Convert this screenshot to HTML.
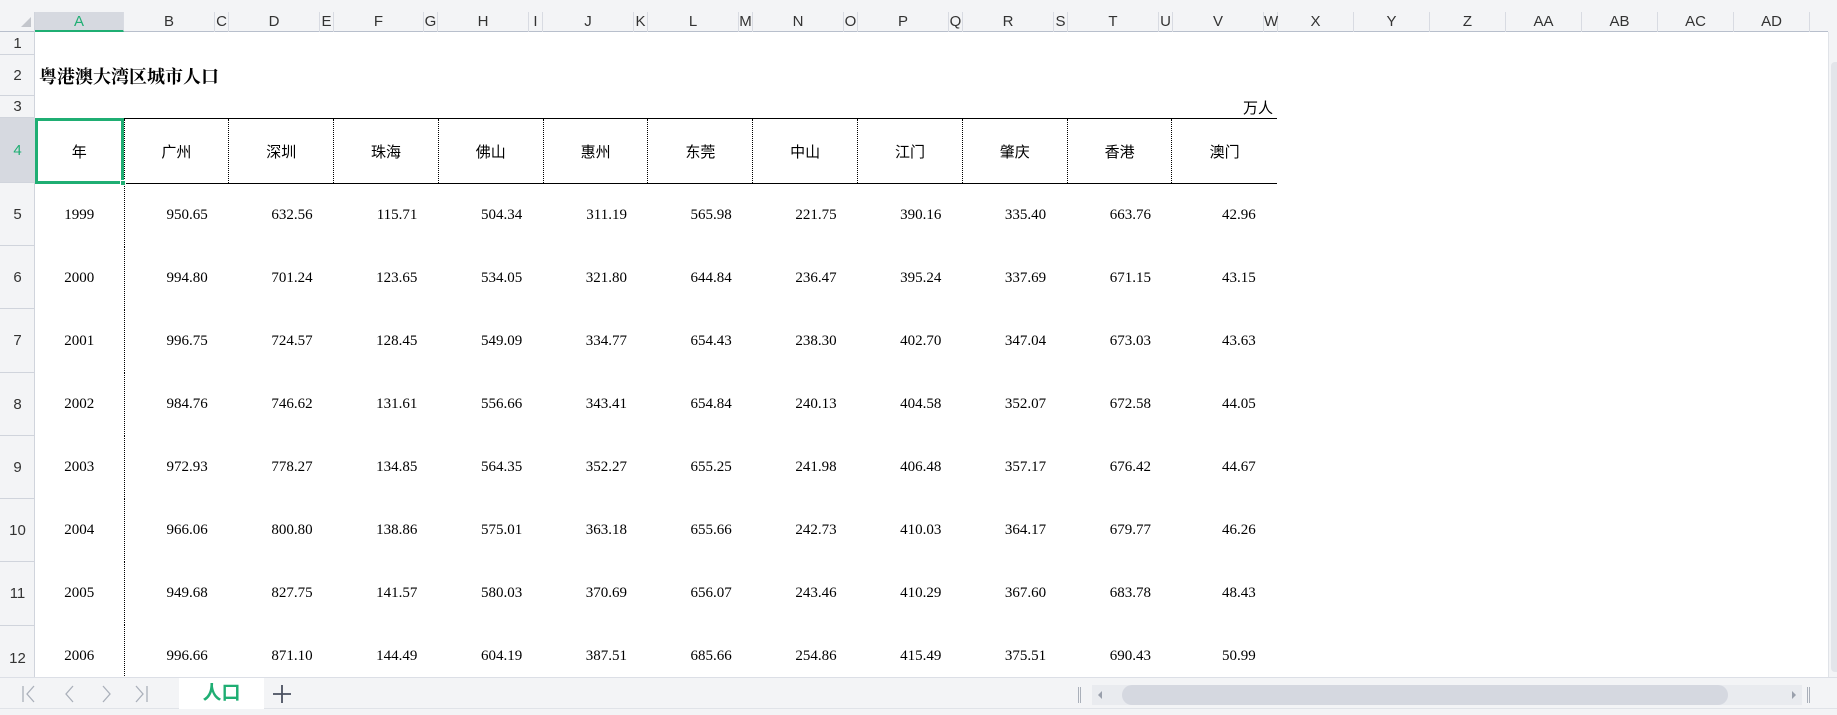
<!DOCTYPE html>
<html><head><meta charset="utf-8">
<style>
*{margin:0;padding:0;box-sizing:border-box}
body{width:1837px;height:715px;overflow:hidden;background:#f3f4f6;position:relative;font-family:"Liberation Serif","Noto Serif CJK SC",serif}
.abs{position:absolute}
#sheet{left:35px;top:32px;width:1793px;height:645px;background:#fff;overflow:hidden}
.ch{position:absolute;top:12px;height:20px;font:15px "Liberation Sans","Noto Sans CJK SC",sans-serif;color:#333;text-align:center;line-height:20px;border-right:1px solid #d8dbe2}
.rh{position:absolute;left:0;width:35px;font:15px "Liberation Sans",sans-serif;color:#333;text-align:center;border-bottom:1px solid #d0d4dc}
table{position:absolute;left:0;top:86px;border-collapse:collapse;table-layout:fixed}
td{font-size:15px;color:#000;text-align:right;padding-right:21px;height:63px;white-space:nowrap}
td:first-child{text-align:center;padding-right:0;border-right:1px dotted #000}
tr.h td{height:65px;text-align:center;padding:0;border-top:1.5px solid #000;border-bottom:1.5px solid #000;border-right:1px dotted #000;font-family:"Liberation Sans","Noto Sans CJK SC",sans-serif}
tr.h td:last-child{border-right:none}
</style></head><body>
<div class="abs" style="left:0;top:12px;width:1828px;height:20px;border-bottom:1px solid #b8bfcc"></div>
<div class="abs" style="left:0;top:12px;width:35px;height:20px;border-right:1px solid #d0d4dc"></div>
<div class="abs" style="left:21px;top:17px;width:0;height:0;border-left:10px solid transparent;border-bottom:10px solid #c3c6cc"></div>
<div class="ch" style="left:35px;width:89px;background:#d6d9e0;color:#1fae73;border-bottom:2px solid #1fae73">A</div>
<div class="ch" style="left:124px;width:91px">B</div><div class="ch" style="left:215px;width:14px">C</div>
<div class="ch" style="left:229px;width:91px">D</div><div class="ch" style="left:320px;width:14px">E</div>
<div class="ch" style="left:334px;width:90px">F</div><div class="ch" style="left:424px;width:14px">G</div>
<div class="ch" style="left:438px;width:91px">H</div><div class="ch" style="left:529px;width:14px">I</div>
<div class="ch" style="left:543px;width:91px">J</div><div class="ch" style="left:634px;width:14px">K</div>
<div class="ch" style="left:648px;width:91px">L</div><div class="ch" style="left:739px;width:14px">M</div>
<div class="ch" style="left:753px;width:91px">N</div><div class="ch" style="left:844px;width:14px">O</div>
<div class="ch" style="left:858px;width:91px">P</div><div class="ch" style="left:949px;width:14px">Q</div>
<div class="ch" style="left:963px;width:91px">R</div><div class="ch" style="left:1054px;width:14px">S</div>
<div class="ch" style="left:1068px;width:91px">T</div><div class="ch" style="left:1159px;width:14px">U</div>
<div class="ch" style="left:1173px;width:91px">V</div><div class="ch" style="left:1264px;width:14px">W</div>
<div class="ch" style="left:1278px;width:76px">X</div>
<div class="ch" style="left:1354px;width:76px">Y</div>
<div class="ch" style="left:1430px;width:76px">Z</div>
<div class="ch" style="left:1506px;width:76px">AA</div>
<div class="ch" style="left:1582px;width:76px">AB</div>
<div class="ch" style="left:1658px;width:76px">AC</div>
<div class="ch" style="left:1734px;width:76px">AD</div>
<div class="abs" style="left:0;top:32px;width:35px;height:645px;border-right:1px solid #d0d4dc"></div>
<div class="rh" style="top:32px;height:23px;line-height:23px">1</div>
<div class="rh" style="top:55px;height:41px;line-height:41px">2</div>
<div class="rh" style="top:96px;height:22px;line-height:22px">3</div>
<div class="rh" style="top:118px;height:65px;line-height:65px;background:#d6d9e0;color:#1fae73">4</div>
<div class="rh" style="top:183px;height:63px;line-height:63px">5</div>
<div class="rh" style="top:246px;height:63px;line-height:63px">6</div>
<div class="rh" style="top:309px;height:64px;line-height:64px">7</div>
<div class="rh" style="top:373px;height:63px;line-height:63px">8</div>
<div class="rh" style="top:436px;height:63px;line-height:63px">9</div>
<div class="rh" style="top:499px;height:63px;line-height:63px">10</div>
<div class="rh" style="top:562px;height:64px;line-height:64px">11</div>
<div class="rh" style="top:626px;height:51px;line-height:66px;border-bottom:none">12</div>
<div id="sheet" class="abs">
<div class="abs" style="left:4px;top:31px;font-weight:bold;font-size:18px">粤港澳大湾区城市人口</div>
<div class="abs" style="left:1208px;top:65px;font:15px 'Liberation Sans','Noto Sans CJK SC',sans-serif">万人</div>
<table>
<colgroup><col style="width:89px"><col span="11" style="width:104.8px"></colgroup>
<tr class="h"><td>年</td><td>广州</td><td>深圳</td><td>珠海</td><td>佛山</td><td>惠州</td><td>东莞</td><td>中山</td><td>江门</td><td>肇庆</td><td>香港</td><td>澳门</td></tr>
<tr><td>1999</td><td>950.65</td><td>632.56</td><td>115.71</td><td>504.34</td><td>311.19</td><td>565.98</td><td>221.75</td><td>390.16</td><td>335.40</td><td>663.76</td><td>42.96</td></tr>
<tr><td>2000</td><td>994.80</td><td>701.24</td><td>123.65</td><td>534.05</td><td>321.80</td><td>644.84</td><td>236.47</td><td>395.24</td><td>337.69</td><td>671.15</td><td>43.15</td></tr>
<tr><td>2001</td><td>996.75</td><td>724.57</td><td>128.45</td><td>549.09</td><td>334.77</td><td>654.43</td><td>238.30</td><td>402.70</td><td>347.04</td><td>673.03</td><td>43.63</td></tr>
<tr><td>2002</td><td>984.76</td><td>746.62</td><td>131.61</td><td>556.66</td><td>343.41</td><td>654.84</td><td>240.13</td><td>404.58</td><td>352.07</td><td>672.58</td><td>44.05</td></tr>
<tr><td>2003</td><td>972.93</td><td>778.27</td><td>134.85</td><td>564.35</td><td>352.27</td><td>655.25</td><td>241.98</td><td>406.48</td><td>357.17</td><td>676.42</td><td>44.67</td></tr>
<tr><td>2004</td><td>966.06</td><td>800.80</td><td>138.86</td><td>575.01</td><td>363.18</td><td>655.66</td><td>242.73</td><td>410.03</td><td>364.17</td><td>679.77</td><td>46.26</td></tr>
<tr><td>2005</td><td>949.68</td><td>827.75</td><td>141.57</td><td>580.03</td><td>370.69</td><td>656.07</td><td>243.46</td><td>410.29</td><td>367.60</td><td>683.78</td><td>48.43</td></tr>
<tr><td>2006</td><td>996.66</td><td>871.10</td><td>144.49</td><td>604.19</td><td>387.51</td><td>685.66</td><td>254.86</td><td>415.49</td><td>375.51</td><td>690.43</td><td>50.99</td></tr>
</table>
<div class="abs" style="left:0;top:86px;width:89px;height:66px;border:3px solid #1fae73"></div>
<div class="abs" style="left:85px;top:148px;width:6px;height:6px;background:#1fae73;border:1px solid #fff"></div>
</div>
<div class="abs" style="left:1828px;top:32px;width:9px;height:645px;background:#f3f4f6;border-left:1px solid #e0e3e8"></div>
<div class="abs" style="left:1831px;top:62px;width:6px;height:610px;background:#e3e5ea;border-radius:4px 0 0 4px"></div>
<div class="abs" style="left:0;top:677px;width:1837px;height:32px;border-top:1px solid #dcdfe6;border-bottom:1px solid #e0e3e8;background:#f3f4f6"></div>
<svg class="abs" style="left:18px;top:684px" width="140" height="20" viewBox="0 0 140 20" fill="none" stroke="#aab0ba" stroke-width="1.3">
<path d="M5 2v16M16 2l-7 8 7 8"/><path d="M55 2l-7 8 7 8"/><path d="M85 2l7 8-7 8"/><path d="M118 2l7 8-7 8M129 2v16"/>
</svg>
<div class="abs" style="left:179px;top:678px;width:85px;height:31px;background:#fff;text-align:center;line-height:31px;font:bold 19px 'Noto Sans CJK SC',sans-serif;color:#1fae73">人口</div>
<svg class="abs" style="left:272px;top:684px" width="20" height="20" fill="none" stroke="#4a5060" stroke-width="1.8"><path d="M10 1v18M1 10h18"/></svg>
<div class="abs" style="left:1078px;top:687px;width:3px;height:16px;border-left:1px solid #aab0ba;border-right:1px solid #aab0ba"></div>
<div class="abs" style="left:1092px;top:685px;width:710px;height:20px;background:#e9ebef"></div>
<div class="abs" style="left:1122px;top:685px;width:606px;height:20px;background:#d5d8e0;border-radius:10px"></div>
<div class="abs" style="left:1098px;top:691px;width:0;height:0;border-top:4px solid transparent;border-bottom:4px solid transparent;border-right:4px solid #9aa0ac"></div>
<div class="abs" style="left:1792px;top:691px;width:0;height:0;border-top:4px solid transparent;border-bottom:4px solid transparent;border-left:4px solid #9aa0ac"></div>
<div class="abs" style="left:1807px;top:687px;width:3px;height:16px;border-left:1px solid #aab0ba;border-right:1px solid #aab0ba"></div>
</body></html>
